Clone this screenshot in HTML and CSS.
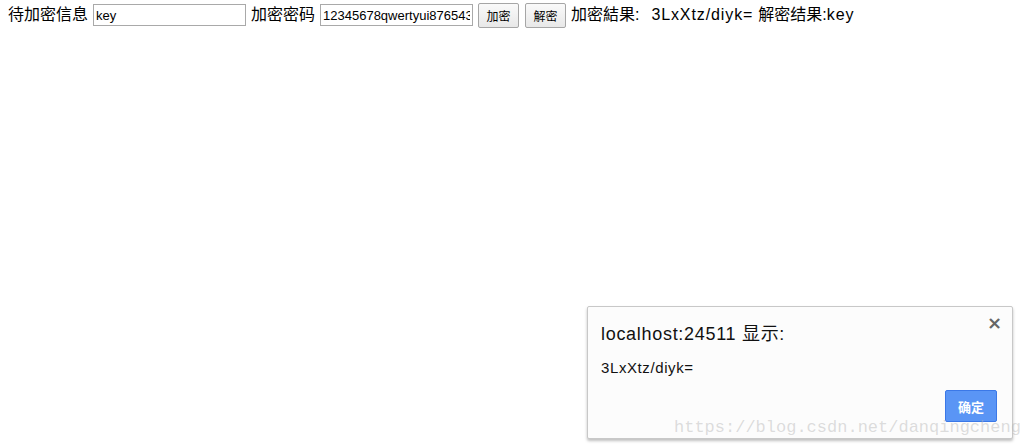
FILE: index.html
```html
<!DOCTYPE html>
<html lang="zh">
<head>
<meta charset="utf-8">
<link rel="stylesheet" href="styles.css">
</head>
<body>
<div class="row">
  <span class="lbl">待加密信息</span>
  <input class="field" type="text" value="key">
  <span class="lbl">加密密码</span>
  <input class="field" type="text" value="12345678qwertyui87654321">
  <button class="btn">加密</button>
  <button class="btn">解密</button>
  <span class="lbl">加密結果:&nbsp;&nbsp;<span class="val shift">3LxXtz/diyk=</span></span>
  <span class="lbl">解密结果:<span class="val">key</span></span>
</div>

<div class="dialog">
  <div class="close">×</div>
  <div class="title">localhost:24511 显示:</div>
  <div class="msg">3LxXtz/diyk=</div>
  <div class="actions"><button class="ok">确定</button></div>
</div>
<div class="watermark">https://blog.csdn.net/danqingcheng</div>
</body>
</html>
```

FILE: styles.css
```css
html, body {
  margin: 0;
  background: #fff;
}
body {
  padding: 4px 8px;
  font-family: "Liberation Sans", "Noto Sans CJK SC", sans-serif;
  font-size: 16px;
  color: #000;
}
.row {
  display: flex;
  align-items: center;
  gap: 5px;
  height: 22px;
  white-space: nowrap;
}
.lbl {
  font-size: 16px;
  line-height: 20px;
}
.val {
  letter-spacing: 0.9px;
}
.shift {
  margin-left: 3px;
}
.field {
  box-sizing: border-box;
  width: 153px;
  height: 22px;
  margin: 0;
  padding: 1px 2px;
  border: 1px solid #a9a9a9;
  font-family: "Liberation Sans", sans-serif;
  font-size: 13px;
  color: #000;
  background: #fff;
}
.btn {
  box-sizing: border-box;
  width: 41px;
  height: 25px;
  margin: 0;
  padding: 0;
  border: 1px solid #a6a6a6;
  border-radius: 2px;
  background: linear-gradient(#fafafa, #e8e8e8);
  font-family: "Noto Sans CJK SC", sans-serif;
  font-size: 12px;
  color: #000;
}
.btn + .btn {
  margin-left: 1px;
}
.dialog {
  position: absolute;
  left: 587px;
  top: 306px;
  width: 426px;
  height: 133px;
  box-sizing: border-box;
  background: #fcfcfc;
  border: 1px solid #c8c8c8;
  border-radius: 2px;
  box-shadow: 0 2px 3px rgba(0,0,0,0.25);
  padding: 14px 15px 0 13px;
  font-family: "Liberation Sans", "Noto Sans CJK SC", sans-serif;
  color: #111;
}
.title {
  font-size: 18px;
  line-height: 24px;
  letter-spacing: 0.7px;
  margin-top: 1px;
}
.msg {
  font-size: 15px;
  line-height: 18px;
  letter-spacing: 0.6px;
  margin-top: 13px;
}
.actions {
  display: flex;
  justify-content: flex-end;
  margin-top: 13px;
}
.ok {
  box-sizing: border-box;
  width: 52px;
  height: 32px;
  border: 1px solid #3b78e7;
  border-radius: 2px;
  background: #5a95f5;
  color: #fff;
  font-family: "Noto Sans CJK SC", sans-serif;
  font-weight: bold;
  font-size: 13px;
  padding: 0;
}
.close {
  position: absolute;
  right: 10px;
  top: 5px;
  font-size: 18px;
  font-weight: bold;
  color: #666;
  font-family: "DejaVu Sans", sans-serif;
}
.watermark {
  position: absolute;
  left: 674px;
  top: 418px;
  font-family: "Liberation Mono", monospace;
  font-size: 17px;
  color: rgba(180,180,180,0.45);
  white-space: nowrap;
}
```
